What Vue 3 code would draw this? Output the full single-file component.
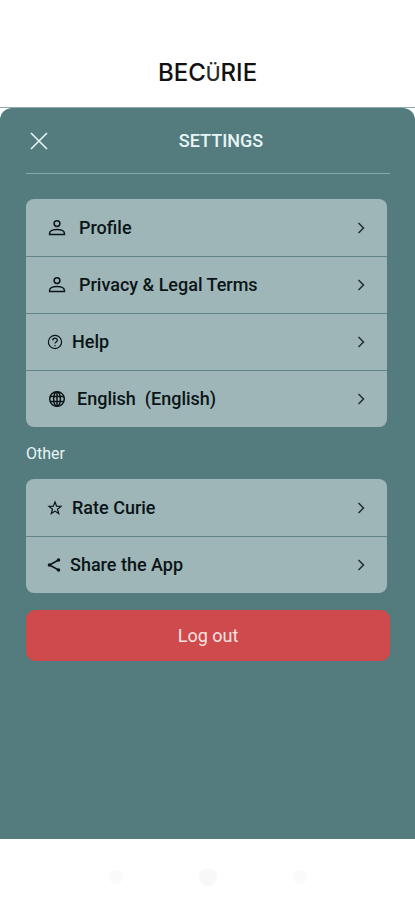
<template>
  <div class="app">
    <header class="brand">BEC<span class="smile">Ü</span>RIE</header>

    <main class="panel">
      <div class="panel-header">
        <button class="close" type="button" aria-label="Close">
          <svg width="18" height="18" viewBox="0 0 18 18">
            <path d="M1 1l16 16M17 1L1 17" />
          </svg>
        </button>
        <h1>SETTINGS</h1>
      </div>

      <nav class="card">
        <a
          v-for="item in accountItems"
          :key="item.label"
          href="#"
          class="row"
          :class="item.icon"
        >
          <svg v-if="item.icon === 'user'" class="icon" width="18" height="18" viewBox="0 0 18 18">
            <circle cx="9" cy="4.6" r="2.9" />
            <path d="M1.6 15.6v-1.4c0-2.4 3.7-3.7 7.4-3.7s7.4 1.3 7.4 3.7v1.4z" />
          </svg>
          <svg v-if="item.icon === 'help'" class="icon thin" width="16" height="16" viewBox="0 0 16 16">
            <circle cx="8" cy="8" r="6.6" />
            <path d="M5.8 6.4c0-3 4.5-2.9 4.5-.2 0 1.7-2.3 1.7-2.3 3.3M8 11v1.2" />
          </svg>
          <svg v-if="item.icon === 'globe'" class="icon" width="18" height="18" viewBox="0 0 18 18">
            <circle cx="9" cy="9" r="7.3" />
            <ellipse cx="9" cy="9" rx="3.4" ry="7.3" />
            <path d="M2.4 6.4h13.2M2.4 11.6h13.2M9 2v14" />
          </svg>
          <span class="label">{{ item.label }}</span>
          <svg class="chevron" width="8" height="12" viewBox="0 0 8 12">
            <path d="M1.5 1l5 5-5 5" />
          </svg>
        </a>
      </nav>

      <h2>Other</h2>

      <nav class="card">
        <a
          v-for="item in otherItems"
          :key="item.label"
          href="#"
          class="row"
          :class="item.icon"
        >
          <svg v-if="item.icon === 'star'" class="icon thin" width="16" height="16" viewBox="0 0 16 16">
            <path d="M8 2l1.6 4.2 4.4.2-3.5 2.8 1.2 4.4L8 11.1l-3.7 2.5 1.2-4.4L2 6.4l4.4-.2z" />
          </svg>
          <svg v-if="item.icon === 'share'" class="icon" width="14" height="16" viewBox="0 0 14 16">
            <path d="M11.5 3L2.5 8l9 5" />
            <circle class="dot" cx="11.5" cy="3" r="1.8" />
            <circle class="dot" cx="2.5" cy="8" r="1.8" />
            <circle class="dot" cx="11.5" cy="13" r="1.8" />
          </svg>
          <span class="label">{{ item.label }}</span>
          <svg class="chevron" width="8" height="12" viewBox="0 0 8 12">
            <path d="M1.5 1l5 5-5 5" />
          </svg>
        </a>
      </nav>

      <button class="logout" type="button">Log out</button>
    </main>

    <footer class="system-bar">
      <span class="key"></span>
      <span class="key home"></span>
      <span class="key"></span>
    </footer>
  </div>
</template>

<script setup>
const accountItems = [
  { icon: "user", label: "Profile" },
  { icon: "user", label: "Privacy & Legal Terms" },
  { icon: "help", label: "Help" },
  { icon: "globe", label: "English  (English)" },
];

const otherItems = [
  { icon: "star", label: "Rate Curie" },
  { icon: "share", label: "Share the App" },
];
</script>

<style>
body {
  margin: 0;
  background: #fff;
}
</style>

<style scoped>
.app {
  display: flex;
  flex-direction: column;
  min-height: 100vh;
  font-family: Roboto, "Liberation Sans", sans-serif;
}

.brand {
  padding: 59px 0 21px;
  box-shadow: inset 0 -1px #8fabac;
  color: #111;
  font-family: Inter, Lato, sans-serif;
  font-size: 24px;
  font-weight: 500;
  line-height: 28px;
  text-align: center;
}

.smile {
  color: #2c2c2c;
  font-size: 20px;
  line-height: 1;
}

.panel {
  flex: 1;
  padding: 0 25px 24px 26px;
  border-radius: 12px 12px 0 0;
  background: #547b7e;
}

.panel-header {
  display: grid;
  grid-template-columns: 26px 1fr;
  align-items: center;
  height: 65px;
  border-bottom: 1px solid #86aaac;
}

h1 {
  margin: 0;
  color: #e6f5f6;
  font-size: 18px;
  font-weight: 500;
  line-height: 24px;
  text-align: center;
}

.close {
  display: flex;
  padding: 4px;
  border: none;
  background: none;
  cursor: pointer;
}

.close path {
  stroke: #e6f5f6;
  stroke-width: 1.6;
}

svg {
  flex: none;
  fill: none;
}

.card {
  margin: 25px 3px 0 0;
  border-radius: 8px;
  background: #9eb6b8;
  overflow: hidden;
}

.row {
  display: flex;
  align-items: center;
  gap: 9px;
  box-sizing: border-box;
  height: 57px;
  padding: 0 22px 0 21px;
  color: #0b1517;
  text-decoration: none;
}

.row + .row {
  border-top: 1px solid #5f8588;
}

.row.user {
  gap: 13px;
  padding-left: 22px;
}

.row.globe {
  gap: 11px;
  padding-left: 22px;
}

.label {
  flex: 1;
  font-size: 18px;
  font-weight: 500;
  line-height: 24px;
  white-space: pre;
}

.icon {
  stroke: #0b1517;
  stroke-width: 1.5;
}

.icon.thin {
  stroke-width: 1.2;
}

.dot {
  fill: #0b1517;
  stroke: none;
}

.chevron {
  stroke: #1f3033;
  stroke-width: 1.5;
}

h2 {
  margin: 15px 0 0;
  color: #e6f5f6;
  font-size: 16px;
  font-weight: 400;
  line-height: 24px;
}

h2 + .card {
  margin-top: 13px;
}

.logout {
  display: block;
  width: 100%;
  height: 51px;
  margin-top: 17px;
  border: none;
  border-radius: 9px;
  background: #ce4a4c;
  color: #fbe3e0;
  font-family: inherit;
  font-size: 18px;
  cursor: pointer;
}

.system-bar {
  display: flex;
  align-items: center;
  justify-content: center;
  gap: 76px;
  height: 61px;
  padding-top: 14px;
  box-sizing: border-box;
}

.key {
  width: 14px;
  height: 14px;
  border-radius: 50%;
  background: #fafafa;
}

.key.home {
  width: 18px;
  height: 18px;
  background: #f8f8f8;
}
</style>
